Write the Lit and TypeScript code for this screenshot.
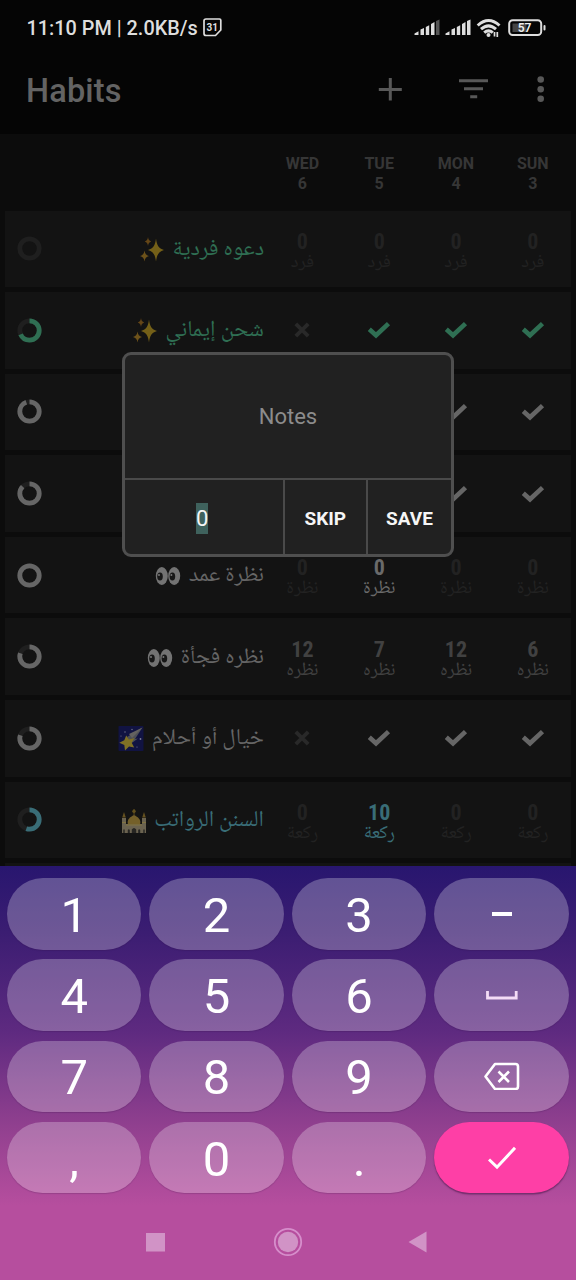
import { LitElement, html, svg, css, nothing } from "lit";
import { customElement } from "lit/decorators.js";

type Cell = { kind: "check" | "cross" | "num"; value?: string; tone: string };
type Habit = { name: string; icon?: string; color: string; ring: number; unit?: string; cells: Cell[] };

const GREEN = "#2f6f53";
const GREY = "#666666";
const CYAN = "#396d77";
const DIM = "#222222";

const check = (tone: string): Cell => ({ kind: "check", tone });
const cross = (): Cell => ({ kind: "cross", tone: "#292929" });
const num = (value: string, tone = DIM): Cell => ({ kind: "num", value, tone });

const habits: Habit[] = [
  { name: "دعوه فردية", icon: "sparkles", color: GREEN, ring: 0, unit: "فرد", cells: [num("0"), num("0"), num("0"), num("0")] },
  { name: "شحن إيماني", icon: "sparkles", color: GREEN, ring: 0.68, cells: [cross(), check(GREEN), check(GREEN), check(GREEN)] },
  { name: "", color: GREY, ring: 0.94, cells: [check(GREY), check(GREY), check(GREY), check(GREY)] },
  { name: "", color: GREY, ring: 0.87, cells: [check(GREY), check(GREY), check(GREY), check(GREY)] },
  { name: "نظرة عمد", icon: "eyes", color: GREY, ring: 1, unit: "نظرة", cells: [num("0"), num("0", "#6a6a6a"), num("0"), num("0")] },
  { name: "نظره فجأة", icon: "eyes", color: GREY, ring: 0.8, unit: "نظره", cells: [num("12", "#414141"), num("7", "#414141"), num("12", "#414141"), num("6", "#414141")] },
  { name: "خيال أو أحلام", icon: "star", color: GREY, ring: 0.8, cells: [cross(), check(GREY), check(GREY), check(GREY)] },
  { name: "السنن الرواتب", icon: "mosque", color: CYAN, ring: 0.55, unit: "ركعة", cells: [num("0"), num("10", CYAN), num("0"), num("0")] },
];

const days = [["WED", "6"], ["TUE", "5"], ["MON", "4"], ["SUN", "3"]];
const keys = ["1", "2", "3", "minus", "4", "5", "6", "space", "7", "8", "9", "back", ",", "0", ".", "enter"];

const emoji: Record<string, unknown> = {
  sparkles: svg`<g fill="#746018">
    <path d="M17 1.500c.9 7 2.600 9.800 8 11.500c-5.400 1.700-7.100 4.500-8 11.500c-.9-7-2.600-9.800-8-11.500c5.400-1.700 7.100-4.500 8-11.500z"/>
    <path fill="#6d521a" d="M5.500 13.500c.5 3.300 1.800 4.700 4.500 5.500c-2.700.8-4 2.200-4.500 5.500c-.5-3.300-1.800-4.700-4.500-5.500c2.700-.8 4-2.200 4.500-5.500z"/>
    <path fill="#654617" d="M9 0c.4 2.600 1.200 3.800 3.200 4.500c-2 .7-2.800 1.900-3.200 4.500c-.4-2.600-1.200-3.800-3.200-4.500c2-.7 2.800-1.900 3.200-4.500z"/></g>`,
  eyes: svg`<ellipse cx="6.800" cy="13" rx="6" ry="9" fill="#737373"/><ellipse cx="19.200" cy="13" rx="6" ry="9" fill="#737373"/>
    <ellipse cx="5" cy="13.500" rx="2.800" ry="4" fill="#171717"/><ellipse cx="17.400" cy="13.500" rx="2.800" ry="4" fill="#171717"/>
    <circle cx="4" cy="12" r="1" fill="#777"/><circle cx="16.400" cy="12" r="1" fill="#777"/>`,
  star: svg`<rect x=".5" y="0" width="25" height="25" rx=".8" fill="#111342"/>
    <path fill="#4d4f56" d="M24.500 1.500L9 11l4 6.500l7-5l-3 .5z"/><path fill="#646260" d="M24.500 1.500L11 8l3 4z"/>
    <path fill="#807025" d="M8.200 9.500l2.800 4 5.500-1.500-2.800 4.700 2.500 4.800-5.200-1-4 4-.7-5.500-5-2.300 5-2.500z"/>
    <g fill="#777991"><circle cx="7" cy="6" r=".7"/><circle cx="14" cy="3.500" r=".7"/><circle cx="3" cy="10" r=".6"/><circle cx="22.500" cy="13" r=".9"/><circle cx="19" cy="21" r=".6"/></g>`,
  mosque: svg`<path fill="#6b6350" d="M1 25V10h4v15zM21 25V10h4v15zM4.500 25v-9h17v9z"/>
    <path fill="#74602a" d="M7 16.500c-1.500-5 2-7.500 6-9.500c4 2 7.500 4.500 6 9.500z"/>
    <path fill="#65511f" d="M1.200 9.500L3 4l1.800 5.500zM21.200 9.500L23 4l1.800 5.500zM12.600 1h.9v6h-.9z"/>
    <circle cx="13" cy="3.200" r="1.700" fill="#62501d"/>
    <path stroke="#817443" stroke-width="1" d="M1 14.500h4M21 14.500h4M5 17h16" />
    <path fill="#262522" d="M10.800 25v-3.500q2.200-3 4.400 0V25zM6.800 25v-3q1-1.500 2 0v3zM17.200 25v-3q1-1.500 2 0v3zM2.300 25v-3.500h1.400V25zM22.300 25v-3.500h1.400V25z"/>`,
};

@customElement("app-root")
export class AppRoot extends LitElement {
  static styles = css`
    :host { display: block; width: 576px; height: 1280px; font-family: Roboto, sans-serif; background: #0c0c0c; }
    * { box-sizing: border-box; }
    svg { display: block; flex: none; }
    .screen { position: relative; display: flex; flex-direction: column; width: 576px; height: 1280px; overflow: hidden; }
    .top { height: 133.500px; background: #050505; flex: none; }
    .status { display: flex; align-items: center; height: 48px; padding: 7px 30px 0 26.500px; color: #dedede; }
    .clock { font-size: 19.850px; font-weight: 500; line-height: 24px; width: 176px; padding-top: 2px; white-space: nowrap; }
    .spacer { flex: 1; }
    .tiny { font: 700 10px Roboto, sans-serif; }
    .bar { display: flex; align-items: center; height: 85px; padding: 0 0 0 26px; }
    .title { font-size: 32.500px; font-weight: 500; color: #636363; line-height: 40px; letter-spacing: .15px; flex: 1; }
    .days { display: grid; grid-template-columns: repeat(4, 76.800px); padding: 20px 5px 0 264px; height: 77px; flex: none;
      text-align: center; font-weight: 700; font-size: 16px; line-height: 20px; color: #363636; }
    .list { display: flex; flex-direction: column; gap: 5px; padding: 0 5px; height: 655px; overflow: hidden; flex: none; }
    .row { display: grid; grid-template-columns: 49px 210px repeat(4, 76.800px); height: 76.600px; background: #131313; align-items: center; flex: none; }
    .ring { margin-left: 12px; }
    .name { display: flex; direction: rtl; align-items: center; gap: 7.500px; padding-top: 2px; font: 22.600px/30px "Noto Naskh Arabic UI", "Noto Naskh Arabic", "Noto Sans Arabic", "DejaVu Sans", sans-serif; white-space: nowrap; }
    .cell { display: flex; flex-direction: column; align-items: center; justify-content: center; }
    .count { padding-top: 6px; }
    .value { font: 700 22px/22px "Roboto Condensed", Roboto, sans-serif; }
    .unit { font: 18.800px/20px "Noto Naskh Arabic UI", "Noto Naskh Arabic", "Noto Sans Arabic", "DejaVu Sans", sans-serif; direction: rtl; }
    .dialog { position: absolute; left: 121.500px; top: 352px; width: 332.500px; height: 204.500px; border: 3px solid #4f4f4f; border-radius: 9px;
      background: #212121; display: grid; grid-template: 125px 73.500px / 158.500px 82.500px 86px; overflow: hidden; }
    .notes { grid-column: 1 / -1; display: flex; align-items: center; justify-content: center; font-size: 22px; color: #8c8c8c; border-bottom: 2px solid #4a4a4a; }
    .field, .action { display: flex; align-items: center; justify-content: center; padding-top: 4px; color: #f5f5f5; }
    .field { padding-right: 3px; }
    .picked { background: #3f625d; font-size: 22px; line-height: 31px; }
    .action { font-weight: 700; font-size: 19px; border-left: 2px solid #4a4a4a; }
    .board { height: 414.500px; flex: none; background: linear-gradient(#28166f 0, #3b1d72 16%, #5e2a80 40%, #91408f 63%, #b64e9e 82%, #b64e9e 100%);
      display: flex; flex-direction: column; }
    .keys { display: grid; grid-template-columns: repeat(4, 134.300px); column-gap: 8.200px; row-gap: 9.800px; padding: 12.500px 7px 0; grid-auto-rows: 71.500px; }
    .key { display: flex; align-items: center; justify-content: center; border-radius: 36px; background: #ffffff42; color: #fff; font-size: 49px; line-height: 60px;
      box-shadow: 0 1px 1px #2a104030; padding-top: 4px; }
    .glyph { padding-top: 0; }
    .enter { background: #fe3fa6; box-shadow: 0 1.500px 1.500px #3a104088; }
    .nav { display: flex; flex: 1; align-items: center; padding: 10px 0 0 145px; gap: 107px; }
    .back { margin-left: -2px; }
  `;

  ring(h: Habit) {
    const c = 2 * Math.PI * 9.7;
    return html`<svg class="ring" width="25" height="25" viewBox="0 0 25 25" fill="none" stroke-width="4.800">
      <circle cx="12.500" cy="12.500" r="9.700" stroke="#1f1f1f"/>
      ${h.ring ? svg`<circle cx="12.500" cy="12.500" r="9.700" stroke=${h.color} stroke-dasharray="${c * h.ring} ${c}" transform="rotate(-90 12.500 12.500)"/>` : nothing}
    </svg>`;
  }

  cell(c: Cell, unit?: string) {
    if (c.kind === "check")
      return html`<div class="cell"><svg width="24" height="18" viewBox="0 0 24 18"><path fill="none" stroke=${c.tone} stroke-width="4.600" stroke-linejoin="miter" d="M2.300 8.300L9 14.300L21.500 2.600"/></svg></div>`;
    if (c.kind === "cross")
      return html`<div class="cell"><svg width="16" height="16" viewBox="0 0 16 16"><path fill="none" stroke=${c.tone} stroke-width="3.800" d="M1.800 1.800L14.200 14.200M14.200 1.800L1.800 14.200"/></svg></div>`;
    return html`<div class="cell count" style="color:${c.tone}"><span class="value">${c.value}</span><span class="unit">${unit}</span></div>`;
  }

  key(k: string) {
    if (k === "minus") return html`<div class="key glyph"><svg width="20" height="4"><rect width="20" height="4" fill="#fff"/></svg></div>`;
    if (k === "space") return html`<div class="key glyph"><svg width="32" height="9" viewBox="0 0 32 9"><path d="M1.500 0V7H30.200V0" fill="none" stroke="#f4dcf6" stroke-width="2.800"/></svg></div>`;
    if (k === "back") return html`<div class="key glyph"><svg width="36" height="28" viewBox="0 0 36 28" fill="none" stroke="#fff" stroke-width="2.600" stroke-linejoin="round"><path d="M11 2H31.500Q34 2 34 4.500V24.500Q34 27 31.500 27H11L1.500 14.500Z"/><path d="M14.500 9.500L25 20M25 9.500L14.500 20" stroke-width="2.600"/></svg></div>`;
    if (k === "enter") return html`<div class="key glyph enter"><svg width="28" height="24" viewBox="0 0 28 24"><path d="M1 13.500L9 21.200L27 1.800" fill="none" stroke="#fff" stroke-width="3"/></svg></div>`;
    return html`<div class="key">${k}</div>`;
  }

  bars(last: string) {
    return html`<svg width="26" height="17" viewBox="0 0 26 17" fill="#dedede"><path d="M.5 16V14.500L4.500 12.200V16zM6.500 10.500L10 9V16H6.500zM11.800 8L15.200 6.300V16H11.800zM17 5L20.500 3V16H17z"/><path fill=${last} d="M22 2L25.500 .5V16H22z"/></svg>`;
  }

  render() {
    return html`<div class="screen">
      <div class="top">
        <div class="status">
          <span class="clock">11:10 PM | 2.0KB/s</span>
          <svg width="19" height="19" viewBox="0 0 19 19"><path d="M3 1H16.500Q17.800 1 17.800 2.300V12L12.500 17.500H3Q1 17.500 1 15.500V3Q1 1 3 1Z" fill="none" stroke="#dedede" stroke-width="1.700"/><text class="tiny" x="9.200" y="12.800" text-anchor="middle" fill="#dedede">31</text></svg>
          <span class="spacer"></span>
          ${this.bars("#555")}<svg width="5" height="17"></svg>${this.bars("#dedede")}
          <svg width="37" height="20" viewBox="0 0 37 20" fill="none" stroke="#dedede" stroke-width="3">
            <path d="M6.700 7.500Q17.500-2.500 28.500 7.500M10 11.200Q17.500 4.500 25 11.200M13.200 14.700Q17.500 11 21.800 14.700"/><circle cx="17.500" cy="17" r="2" fill="#dedede" stroke="none"/><path stroke-width="1.700" d="M23.500 18.500v-4.500M26.300 14v5"/></svg>
          <svg width="38" height="18" viewBox="0 0 38 18"><rect x="1.200" y="1.200" width="32" height="14.800" rx="3.500" fill="none" stroke="#dedede" stroke-width="2"/><rect x="4.500" y="4.500" width="14" height="8.500" fill="#444"/><rect x="35.500" y="6" width="2" height="5.500" rx="1" fill="#dedede"/><text x="16.500" y="12.800" text-anchor="middle" font-size="12" font-weight="600" fill="#eee">57</text></svg>
        </div>
        <div class="bar">
          <span class="title">Habits</span>
          <svg width="198" height="30" viewBox="0 0 198 30" fill="#585858"><path d="M10.800 2h3v10h10v3h-10v9.500h-3v-9.500h-10v-3h10zM81 3.200h29v3h-29zM86 11.200h19v3h-19zM92.200 19.300h7v3h-7z"/><circle cx="162.700" cy="3.500" r="3.300"/><circle cx="162.700" cy="13.200" r="3.300"/><circle cx="162.700" cy="22.800" r="3.300"/></svg>
        </div>
      </div>
      <div class="days">${days.map(([d, n]) => html`<div>${d}<br>${n}</div>`)}</div>
      <div class="list">
        ${habits.map((h) => html`<div class="row">${this.ring(h)}
          <div class="name" style="color:${h.color}"><span>${h.name}</span>${h.icon ? html`<svg width="26" height="26" viewBox="0 0 26 26">${emoji[h.icon]}</svg>` : nothing}</div>
          ${h.cells.map((c) => this.cell(c, h.unit))}</div>`)}
        <div class="row"></div>
      </div>
      <div class="board">
        <div class="keys">${keys.map((k) => this.key(k))}</div>
        <div class="nav">
          <svg width="21" height="20"><rect x="1" y="1" width="19" height="18.500" fill="#d193c6"/></svg>
          <svg width="30" height="30" viewBox="0 0 30 30"><circle cx="15" cy="15" r="10.200" fill="#d193c6"/><circle cx="15" cy="15" r="13.200" fill="none" stroke="#d68ecb" stroke-width="1.800"/></svg>
          <svg class="back" width="20" height="24" viewBox="0 0 20 24"><path fill="#d193c6" d="M18.500 1.500V22.500L.5 12z"/></svg>
        </div>
      </div>
      <div class="dialog">
        <div class="notes">Notes</div>
        <div class="field"><span class="picked">0</span></div>
        <div class="action">SKIP</div>
        <div class="action">SAVE</div>
      </div>
    </div>`;
  }
}
